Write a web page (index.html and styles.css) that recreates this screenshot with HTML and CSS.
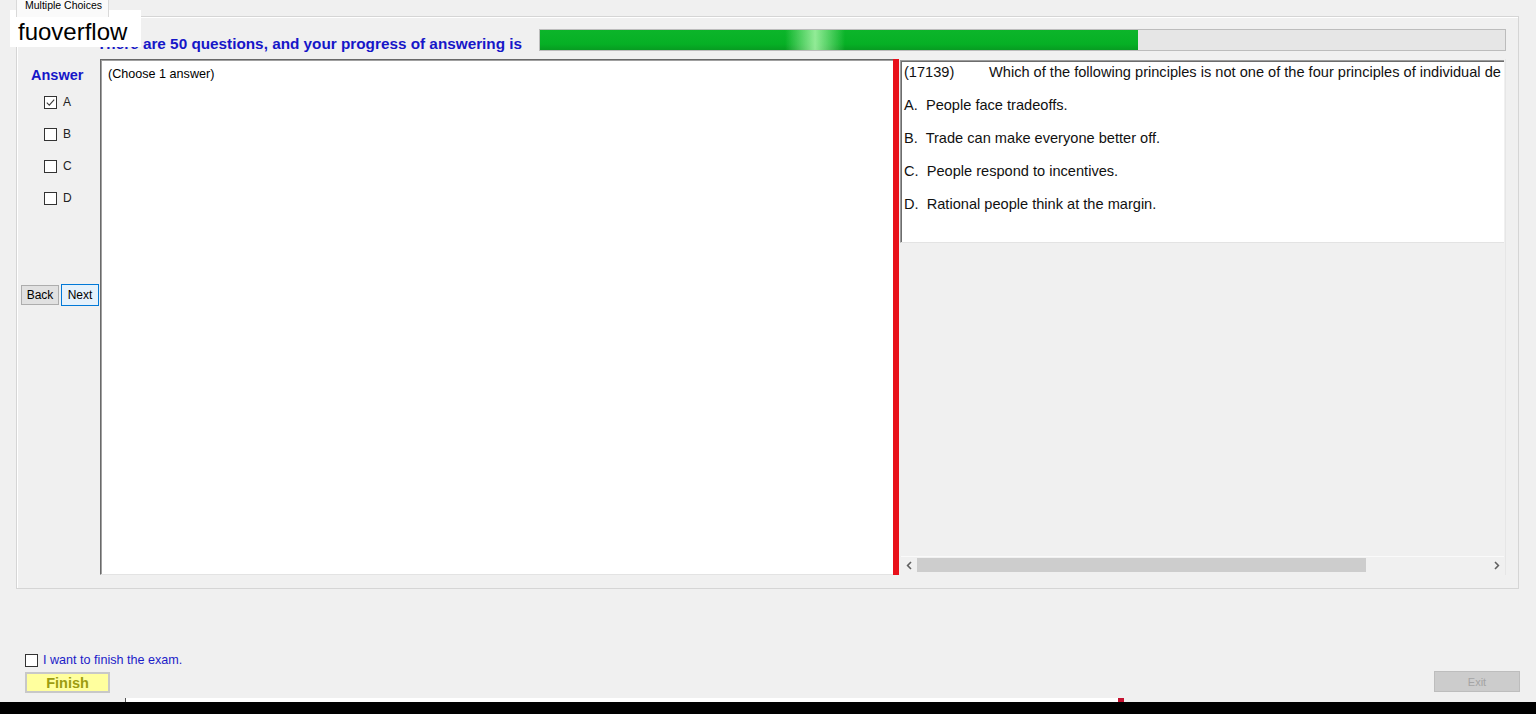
FILE: index.html
```html
<!DOCTYPE html>
<html lang="en">
<head>
<meta charset="utf-8">
<title>Multiple Choices</title>
<link rel="stylesheet" href="styles.css">
</head>
<body>
<div class="window">
  <div class="tabs"><div class="tab">Multiple Choices</div></div>

  <div class="group">
    <div class="head">
      <div class="heading">There are 50 questions, and your progress of answering is</div>
      <div class="progress"><div class="progress-fill" style="width:62%"></div></div>
    </div>

    <div class="main">
      <div class="side">
        <div class="answer-title">Answer</div>
        <div class="options">
          <label class="opt"><span class="box"><svg width="11" height="11" viewBox="0 0 11 11"><path d="M1.8 5.6 L4.3 8.1 L9.2 2.6" fill="none" stroke="#3a3a3a" stroke-width="1.1"/></svg></span>A</label>
          <label class="opt"><span class="box"></span>B</label>
          <label class="opt"><span class="box"></span>C</label>
          <label class="opt"><span class="box"></span>D</label>
        </div>
        <div class="nav">
          <button class="btn">Back</button>
          <button class="btn focus">Next</button>
        </div>
      </div>

      <div class="notes">(Choose 1 answer)</div>
      <div class="splitter"></div>

      <div class="qpane">
        <div class="question">
          <div class="qline"><span class="qid">(17139)</span>Which of the following principles is not one of the four principles of individual de</div>
          <div class="qline">A.  People face tradeoffs.</div>
          <div class="qline">B.  Trade can make everyone better off.</div>
          <div class="qline">C.  People respond to incentives.</div>
          <div class="qline">D.  Rational people think at the margin.</div>
        </div>
        <div class="pane-fill"></div>
        <div class="hscroll">
          <span class="arrow"><svg width="7" height="9" viewBox="0 0 7 9"><path d="M5 1 L1.6 4.5 L5 8" fill="none" stroke="#606060" stroke-width="1.6"/></svg></span>
          <div class="track"><div class="thumb"></div></div>
          <span class="arrow"><svg width="7" height="9" viewBox="0 0 7 9"><path d="M2 1 L5.4 4.5 L2 8" fill="none" stroke="#606060" stroke-width="1.6"/></svg></span>
        </div>
      </div>
    </div>
  </div>

  <div class="footer">
    <div class="finish-col">
      <label class="finish-check"><span class="box"></span>I want to finish the exam.</label>
      <button class="finish-btn">Finish</button>
    </div>
    <button class="exit-btn">Exit</button>
  </div>

  <div class="strip">
    <div class="strip-bar"></div>
    <div class="strip-mark"></div>
  </div>
  <div class="bottom-bar"></div>
</div>

<div class="badge">fuoverflow</div>
</body>
</html>
```

FILE: styles.css
```css
* { box-sizing: border-box; }

html, body {
  margin: 0;
  height: 714px;
  overflow: hidden;
}

body {
  position: relative;
  background: #f0f0f0;
  font-family: "Liberation Sans", Arial, sans-serif;
  color: #000;
}

.window {
  display: flex;
  flex-direction: column;
  height: 714px;
}

/* tab strip */
.tabs {
  height: 16px;
  padding-left: 16px;
  display: flex;
}
.tab {
  height: 17px;
  padding: 0 6px 0 8px;
  background: #fafafa;
  border-left: 1px solid #d9d9d9;
  border-right: 1px solid #d9d9d9;
  font-size: 10.5px;
  line-height: 11px;
  white-space: nowrap;
  overflow: hidden;
  position: relative;
  z-index: 1;
}

/* group panel */
.group {
  margin: 0 17px 0 16px;
  height: 573px;
  border: 1px solid #d5d5d5;
  box-shadow: inset 1px 1px 0 #fff;
  display: flex;
  flex-direction: column;
}

.head {
  height: 42px;
  display: flex;
  align-items: flex-start;
  padding: 0 12px 0 80px;
}
.heading {
  margin-top: 19px;
  font-size: 15.3px;
  font-weight: bold;
  line-height: 16px;
  color: #1616c8;
  white-space: nowrap;
}
.progress {
  margin: 12px 0 0 auto;
  width: 967px;
  height: 22px;
  border: 1px solid #bcbcbc;
  background: #e6e6e6;
}
.progress-fill {
  height: 100%;
  background:
    linear-gradient(90deg, rgba(150,240,150,0) 41%, rgba(170,245,170,0.85) 46%, rgba(150,240,150,0) 51%),
    linear-gradient(#0cb52a, #06b025 70%, #079c22);
}

.main {
  height: 516px;
  display: flex;
  padding-right: 12px;
}

/* answer column */
.side {
  width: 83px;
  display: flex;
  flex-direction: column;
}
.answer-title {
  margin: 8px 0 0 14px;
  font-size: 14.5px;
  font-weight: bold;
  line-height: 16px;
  color: #1616c8;
}
.options {
  margin-top: 3px;
  padding-left: 27px;
  display: flex;
  flex-direction: column;
}
.opt {
  height: 32px;
  display: flex;
  align-items: center;
  gap: 6px;
  font-size: 12px;
  color: #222;
}
.box {
  width: 13px;
  height: 13px;
  border: 1px solid #333;
  background: #fff;
  display: flex;
  align-items: center;
  justify-content: center;
  flex: none;
}
.nav {
  margin-top: 70px;
  padding-left: 4px;
  display: flex;
  align-items: center;
  gap: 2px;
}
.btn {
  width: 38px;
  height: 20px;
  padding: 0;
  font-family: "Liberation Sans", Arial, sans-serif;
  font-size: 12px;
  color: #000;
  background: #e1e1e1;
  border: 1px solid #adadad;
}
.btn.focus {
  height: 22px;
  background: #e5f1fb;
  border-color: #0078d7;
}

/* notes box */
.notes {
  width: 793px;
  background: #fff;
  border-top: 1px solid #696969;
  border-left: 1px solid #696969;
  border-bottom: 1px solid #e3e3e3;
  box-shadow: inset 1px 1px 0 #a0a0a0;
  padding: 7px 0 0 7px;
  font-size: 12.6px;
  line-height: 14px;
}

.splitter {
  width: 6px;
  background: #e8101a;
}

/* question pane */
.qpane {
  width: 607px;
  display: flex;
  flex-direction: column;
  border-right: 1px solid #e6e6e6;
}
.question {
  margin: 1px 1px 0 1px;
  height: 183px;
  background: #fff;
  border-top: 1px solid #9a9a9a;
  border-left: 1px solid #9a9a9a;
  border-bottom: 1px solid #e3e3e3;
  box-shadow: inset 1px 1px 0 #6d6d6d;
  padding: 3px 0 0 3px;
  display: flex;
  flex-direction: column;
  gap: 17px;
  overflow: hidden;
}
.qline {
  font-size: 14.6px;
  line-height: 16px;
  white-space: pre;
  color: #111;
}
.qid {
  display: inline-block;
  width: 85px;
}
.pane-fill { flex: 1; }

.hscroll {
  height: 17px;
  margin: 0 1px 2px 2px;
  display: flex;
  align-items: stretch;
  background: #f0f0f0;
  border-top: 1px solid #fafafa;
}
.arrow {
  width: 16px;
  display: flex;
  align-items: center;
  justify-content: center;
}
.track {
  flex: 1;
  display: flex;
  padding: 1px 0;
}
.thumb {
  width: 449px;
  background: #cdcdcd;
}

/* footer */
.footer {
  margin-top: 63px;
  padding: 0 16px 0 25px;
  display: flex;
  justify-content: space-between;
  align-items: flex-end;
}
.finish-col {
  display: flex;
  flex-direction: column;
}
.finish-check {
  height: 16px;
  display: flex;
  align-items: center;
  gap: 5px;
  font-size: 12.6px;
  color: #1c1cc8;
}
.finish-btn {
  margin-top: 4px;
  width: 85px;
  height: 21px;
  padding: 0;
  background: #ffff9e;
  border: 2px solid #c8c8c8;
  font-family: "Liberation Sans", Arial, sans-serif;
  font-size: 14.5px;
  font-weight: bold;
  color: #9c9c10;
}
.exit-btn {
  margin-bottom: 1px;
  width: 86px;
  height: 21px;
  padding: 0;
  background: #cccccc;
  border: 1px solid #bdbdbd;
  font-family: "Liberation Sans", Arial, sans-serif;
  font-size: 11px;
  color: #a4a4a4;
}

/* bottom strip */
.strip {
  margin-top: 5px;
  height: 4px;
  padding-left: 125px;
  display: flex;
}
.strip-bar {
  width: 993px;
  background: #fff;
  border-left: 1px solid #555;
}
.strip-mark {
  width: 6px;
  background: #c41230;
}
.bottom-bar {
  flex: 1;
  background: #000;
}

/* corner badge */
.badge {
  position: absolute;
  top: 10px;
  left: 10px;
  width: 131px;
  height: 37px;
  padding: 6px 0 0 8px;
  background: #fff;
  font-size: 24px;
  line-height: 31px;
  color: #000;
}
```
